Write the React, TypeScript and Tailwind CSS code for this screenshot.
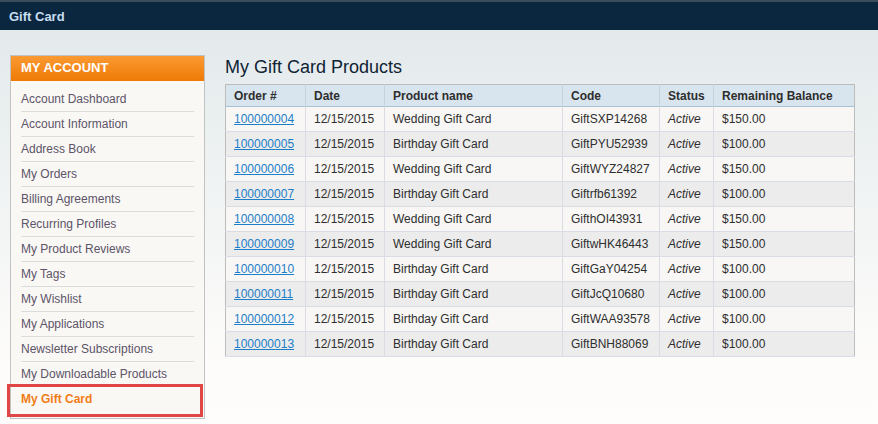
const menu = [
  'Account Dashboard',
  'Account Information',
  'Address Book',
  'My Orders',
  'Billing Agreements',
  'Recurring Profiles',
  'My Product Reviews',
  'My Tags',
  'My Wishlist',
  'My Applications',
  'Newsletter Subscriptions',
  'My Downloadable Products',
]

const rows = [
  ['100000004', 'Wedding Gift Card', 'GiftSXP14268', '$150.00'],
  ['100000005', 'Birthday Gift Card', 'GiftPYU52939', '$100.00'],
  ['100000006', 'Wedding Gift Card', 'GiftWYZ24827', '$150.00'],
  ['100000007', 'Birthday Gift Card', 'Giftrfb61392', '$100.00'],
  ['100000008', 'Wedding Gift Card', 'GifthOI43931', '$150.00'],
  ['100000009', 'Wedding Gift Card', 'GiftwHK46443', '$150.00'],
  ['100000010', 'Birthday Gift Card', 'GiftGaY04254', '$100.00'],
  ['100000011', 'Birthday Gift Card', 'GiftJcQ10680', '$100.00'],
  ['100000012', 'Birthday Gift Card', 'GiftWAA93578', '$100.00'],
  ['100000013', 'Birthday Gift Card', 'GiftBNH88069', '$100.00'],
]

export default function App() {
  return (
    <div className="w-[878px] h-[424px] overflow-hidden font-['Liberation_Sans',Arial,sans-serif] text-[12px] bg-[linear-gradient(180deg,#e1e8eb_0%,#eef2f2_40%,#fdfcfa_85%,#fefdfb_100%)]">
      <div className="h-[30px] bg-[#0b2740] border-t-2 border-[#3b4c5b] pl-[9px] pt-[5px] text-[13px] font-bold text-[#c6def0]">
        Gift Card
      </div>

      <div className="flex pt-[25px] pl-[10px]">
        <div className="w-[195px] shrink-0">
          <div className="border border-[#c2c2c2] bg-[#faf8f5]">
            <div className="h-[25px] bg-[linear-gradient(180deg,#fb9a33,#ee7a05)] pl-[10px] pt-[2px] text-[13px] font-bold text-white">
              MY ACCOUNT
            </div>
            <ul className="px-[10px] pt-[6px]">
              {menu.map((m) => (
                <li key={m} className="h-[25px] border-b border-[#dcdcdc] leading-[25px] text-[#5c5468]">
                  {m}
                </li>
              ))}
              <li className="relative h-[31px] leading-[25px] font-bold text-[#f07d16]">
                My Gift Card
                <div className="absolute left-[-14px] right-[-9px] top-[-3px] h-[33px] border-[3px] border-[#e04646]" />
              </li>
            </ul>
          </div>
        </div>

        <div className="ml-[20px] w-[630px]">
          <h1 className="h-[29px] pt-[2px] text-[18px] leading-[20px] text-[#0f2333]">My Gift Card Products</h1>
          <table className="w-[630px] border-collapse border border-[#bcbcbc] text-[#2e2e2e]">
            <thead>
              <tr className="h-[22px] bg-[#d9e5ee] border-b border-[#a9c1d2] font-bold text-left">
                <th className="w-[80px] pl-[8px] border-r border-[#c6d3dd]">Order #</th>
                <th className="w-[79px] pl-[8px] border-r border-[#c6d3dd]">Date</th>
                <th className="w-[178px] pl-[8px] border-r border-[#c6d3dd]">Product name</th>
                <th className="w-[97px] pl-[8px] border-r border-[#c6d3dd]">Code</th>
                <th className="w-[54px] pl-[8px] border-r border-[#c6d3dd]">Status</th>
                <th className="pl-[8px]">Remaining Balance</th>
              </tr>
            </thead>
            <tbody>
              {rows.map((r, i) => (
                <tr key={r[0]} className={`h-[25px] border-b border-[#d9dde3] ${i % 2 === 0 ? 'bg-[#f8f7f5]' : 'bg-[#ececec]'}`}>
                  <td className="pl-[8px] border-r border-[#d9dde3]">
                    <a className="text-[#1e7ec8] underline">{r[0]}</a>
                  </td>
                  <td className="pl-[8px] border-r border-[#d9dde3]">12/15/2015</td>
                  <td className="pl-[8px] border-r border-[#d9dde3]">{r[1]}</td>
                  <td className="pl-[8px] border-r border-[#d9dde3]">{r[2]}</td>
                  <td className="pl-[8px] border-r border-[#d9dde3] italic">Active</td>
                  <td className="pl-[8px]">{r[3]}</td>
                </tr>
              ))}
            </tbody>
          </table>
        </div>
      </div>
    </div>
  )
}
